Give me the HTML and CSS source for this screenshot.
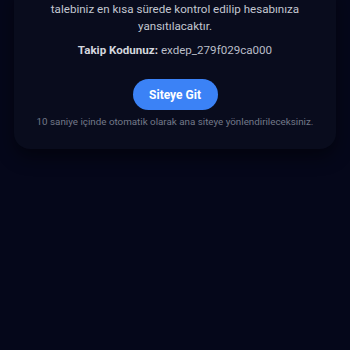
FILE: index.html
```html
<!DOCTYPE html>
<html lang="tr">
<head>
<meta charset="utf-8">
<link rel="stylesheet" href="styles.css">
</head>
<body>
<main class="page">
  <section class="card">
    <p class="message">Havale/EFT işleminizi tamamladıktan sonra, yatırım talebiniz en kısa sürede kontrol edilip hesabınıza yansıtılacaktır.</p>
    <p class="code"><strong>Takip Kodunuz:</strong> exdep_279f029ca000</p>
    <a class="btn" href="#">Siteye Git</a>
    <p class="note">10 saniye içinde otomatik olarak ana siteye yönlendirileceksiniz.</p>
  </section>
</main>
</body>
</html>
```
FILE: styles.css
```css
html, body {
  margin: 0;
  padding: 0;
  background: #05071a;
  height: 100%;
  overflow: hidden;
}
.page {
  display: flex;
  justify-content: center;
  padding: 0 14px;
  margin-top: -16px;
  font-family: Roboto, "Noto Sans", sans-serif;
}
.card {
  width: 100%;
  background: #090c1d;
  border-radius: 16px;
  box-shadow: 0 8px 18px rgba(0, 0, 0, 0.45);
  padding: 0 10px 20px;
  display: flex;
  flex-direction: column;
  align-items: center;
  text-align: center;
}
.message {
  margin: 0;
  font-size: 11.6px;
  line-height: 17px;
  color: #c3c7d1;
  max-width: 268px;
}
.code {
  margin: 7px 0 0;
  font-size: 11.6px;
  line-height: 17px;
  color: #b9bdc8;
}
.code strong {
  color: #d3d6de;
  font-weight: 700;
}
.btn {
  margin-top: 20px;
  display: inline-flex;
  align-items: center;
  justify-content: center;
  width: 85px;
  height: 31px;
  border-radius: 999px;
  background: #3b82f6;
  color: #fff;
  font-weight: 700;
  font-size: 12px;
  text-decoration: none;
}
.note {
  margin: 5px 0 0;
  font-size: 9.8px;
  line-height: 14px;
  color: #737989;
  white-space: nowrap;
}
```
